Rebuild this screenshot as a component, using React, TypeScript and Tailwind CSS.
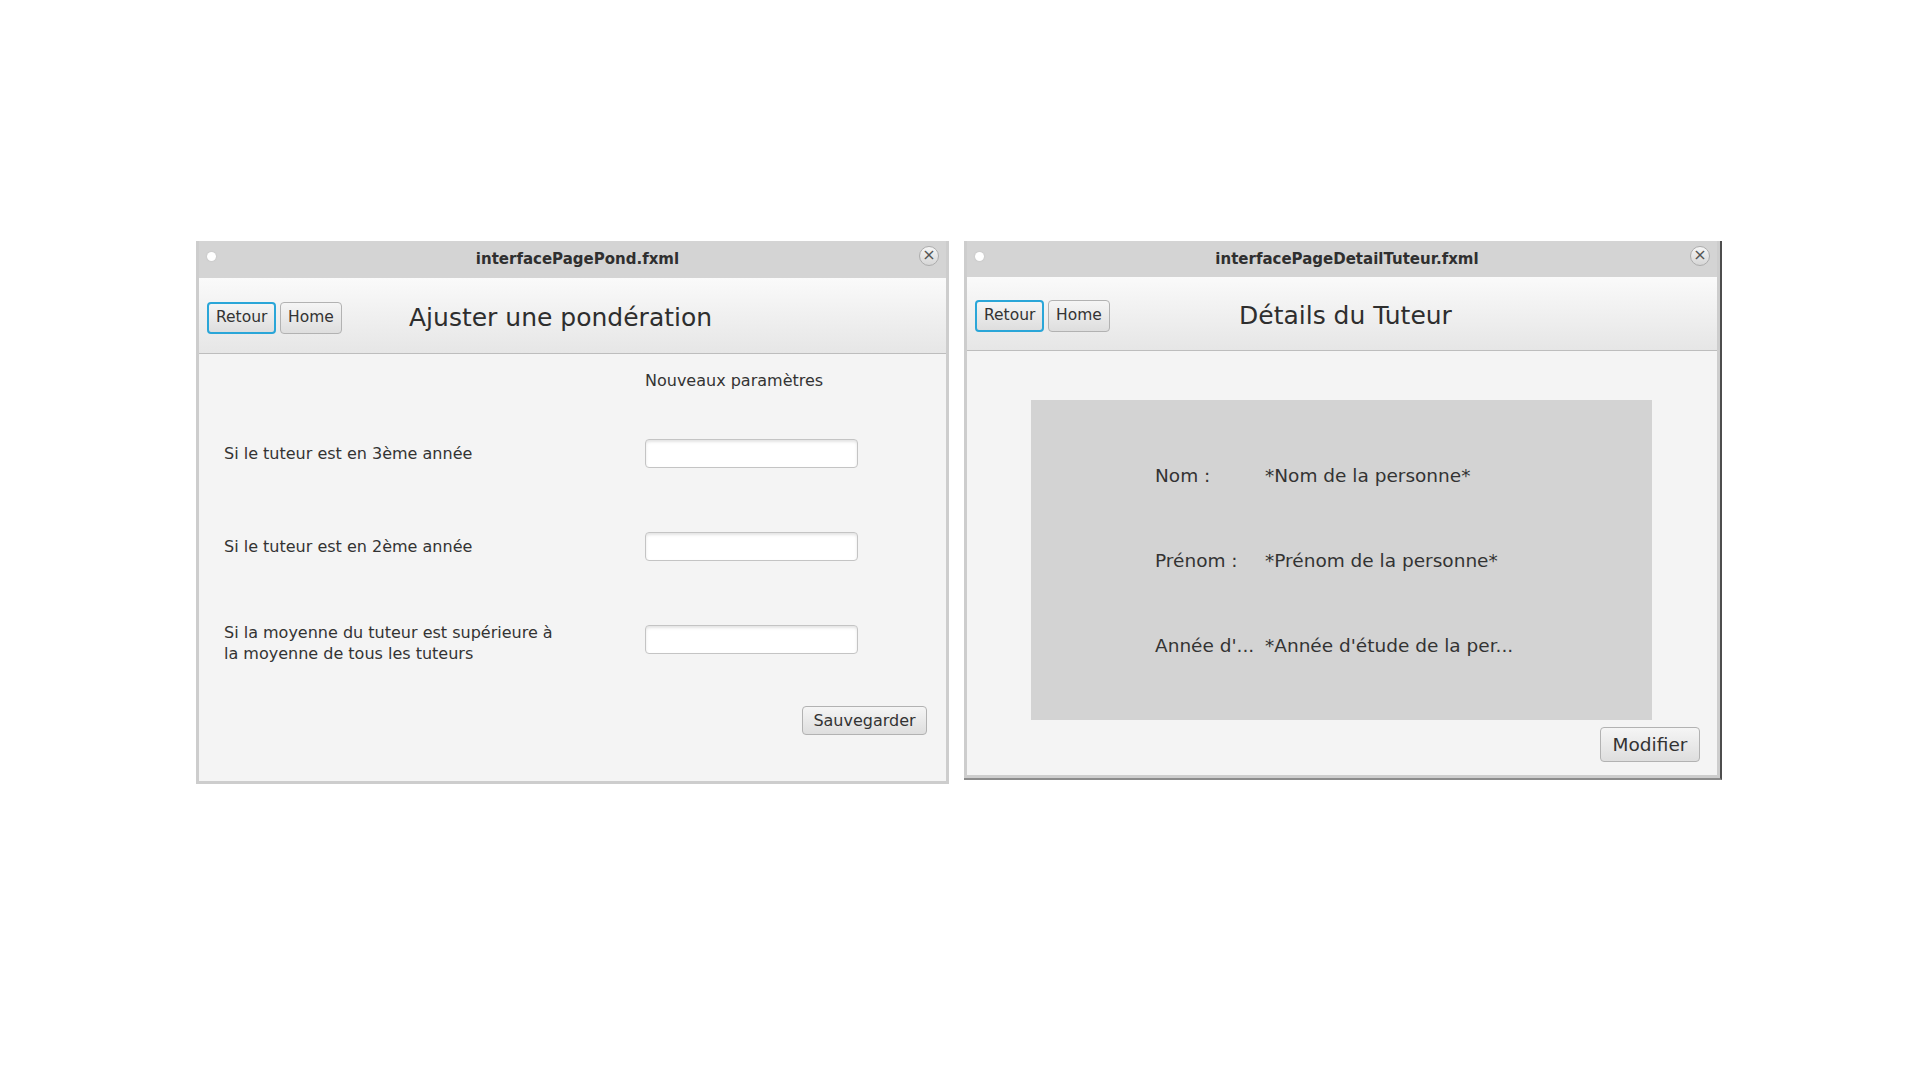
import React from "react"

const font = { fontFamily: '"DejaVu Sans", "Liberation Sans", sans-serif' }

function TitleBar({ title, h }: { title: string; h: string }) {
  return (
    <div className={"relative flex items-center justify-center bg-[#d4d4d4] pl-[10px] " + h}>
      {/* window dot */}
      <div className="absolute left-[8px] top-[11px] size-[9px] rounded-full bg-white shadow-[0_0_2px_#bbb]" />
      <span className="text-[15px] font-bold text-[#2f2f2f]">{title}</span>
      {/* close */}
      <div className="absolute right-[7px] top-[5px] flex size-[20px] items-center justify-center rounded-full border border-[#adadad] bg-gradient-to-b from-[#f6f6f6] to-[#d6d6d6] pb-[2px] text-[16px] leading-none text-[#555]">
        ×
      </div>
    </div>
  )
}

function FxButton({ label, focused, className }: { label: string; focused?: boolean; className?: string }) {
  return (
    <button
      className={
        "rounded-[4px] bg-gradient-to-b from-[#f5f5f5] to-[#dedede] px-[7px] text-[#333] " +
        (focused ? "border-2 border-[#2aa6d8] " : "border border-[#b2b2b2] ") +
        (className ?? "")
      }
    >
      {label}
    </button>
  )
}

function Header({ title, titleOffset, h }: { title: string; titleOffset: string; h: string }) {
  return (
    <div className={"flex items-center border-b border-[#bdbdbd] bg-gradient-to-b from-[#fafafa] to-[#e6e6e6] pl-[8px] pt-[5px] " + h}>
      <FxButton label="Retour" focused className="h-[32px] w-[69px] text-[15.5px]" />
      <FxButton label="Home" className="ml-[4px] h-[32px] w-[62px] text-[15.5px]" />
      <h1 className={"text-[25px] text-[#2e2e2e] " + titleOffset}>{title}</h1>
    </div>
  )
}

const rows = [
  ["Si le tuteur est en 3ème année"],
  ["Si le tuteur est en 2ème année"],
  ["Si la moyenne du tuteur est supérieure à", "la moyenne de tous les tuteurs"],
]

function PondWindow() {
  return (
    <div className="flex h-[543px] w-[753px] flex-col border-x-[3px] border-b-[3px] border-[#cdcdcd] bg-[#f4f4f4]">
      <TitleBar title="interfacePagePond.fxml" h="h-[37px]" />
      <Header title="Ajuster une pondération" titleOffset="ml-[67px]" h="h-[76px]" />
      <div className="flex flex-1 flex-col pl-[25px] pr-[19px] pt-[17px] text-[16px] text-[#333]">
        <p className="ml-[421px] leading-[20px]">Nouveaux paramètres</p>
        <div className="mt-[16px]">
          {rows.map((lines, i) => (
            <div key={i} className="flex h-[93px] items-center">
              <div className={"w-[421px] leading-[21px] " + (lines.length > 1 ? "mt-[6px]" : "")}>
                {lines.map((l) => (
                  <p key={l}>{l}</p>
                ))}
              </div>
              <div className="h-[29px] w-[213px] rounded-[4px] border border-[#c4c4c4] bg-white shadow-[inset_0_2px_3px_#e4e4e4]" />
            </div>
          ))}
        </div>
        <div className="mt-[20px] flex justify-end">
          <FxButton label="Sauvegarder" className="h-[29px] w-[125px] text-[16px]" />
        </div>
      </div>
    </div>
  )
}

const details = [
  ["Nom :", "*Nom de la personne*"],
  ["Prénom :", "*Prénom de la personne*"],
  ["Année d'...", "*Année d'étude de la per..."],
]

function DetailWindow() {
  return (
    <div className="h-[539px] w-[758px] border-r-2 border-b-2 border-r-[#4e4e4e] border-b-[#8c8c8c]">
      <div className="flex h-full flex-col border-x-[3px] border-b-[3px] border-[#cdcdcd] bg-[#f4f4f4]">
        <TitleBar title="interfacePageDetailTuteur.fxml" h="h-[36px]" />
        <Header title="Détails du Tuteur" titleOffset="ml-[129px]" h="h-[74px]" />
        <div className="flex flex-1 flex-col pl-[64px] pr-[17px] pt-[49px]">
          <div className="flex h-[320px] w-[621px] flex-col bg-[#d3d3d3] pt-[33px] text-[18.5px] text-[#333]">
            {details.map(([k, v]) => (
              <div key={k} className="flex h-[85px] items-center pl-[124px]">
                <span className="w-[110px]">{k}</span>
                <span>{v}</span>
              </div>
            ))}
          </div>
          <div className="mt-[7px] flex justify-end">
            <FxButton label="Modifier" className="h-[35px] w-[100px] text-[18.5px]" />
          </div>
        </div>
      </div>
    </div>
  )
}

export default function App() {
  return (
    <div style={font} className="flex h-[1080px] w-[1920px] items-start gap-[15px] bg-white pl-[196px] pt-[241px]">
      <PondWindow />
      <DetailWindow />
    </div>
  )
}
